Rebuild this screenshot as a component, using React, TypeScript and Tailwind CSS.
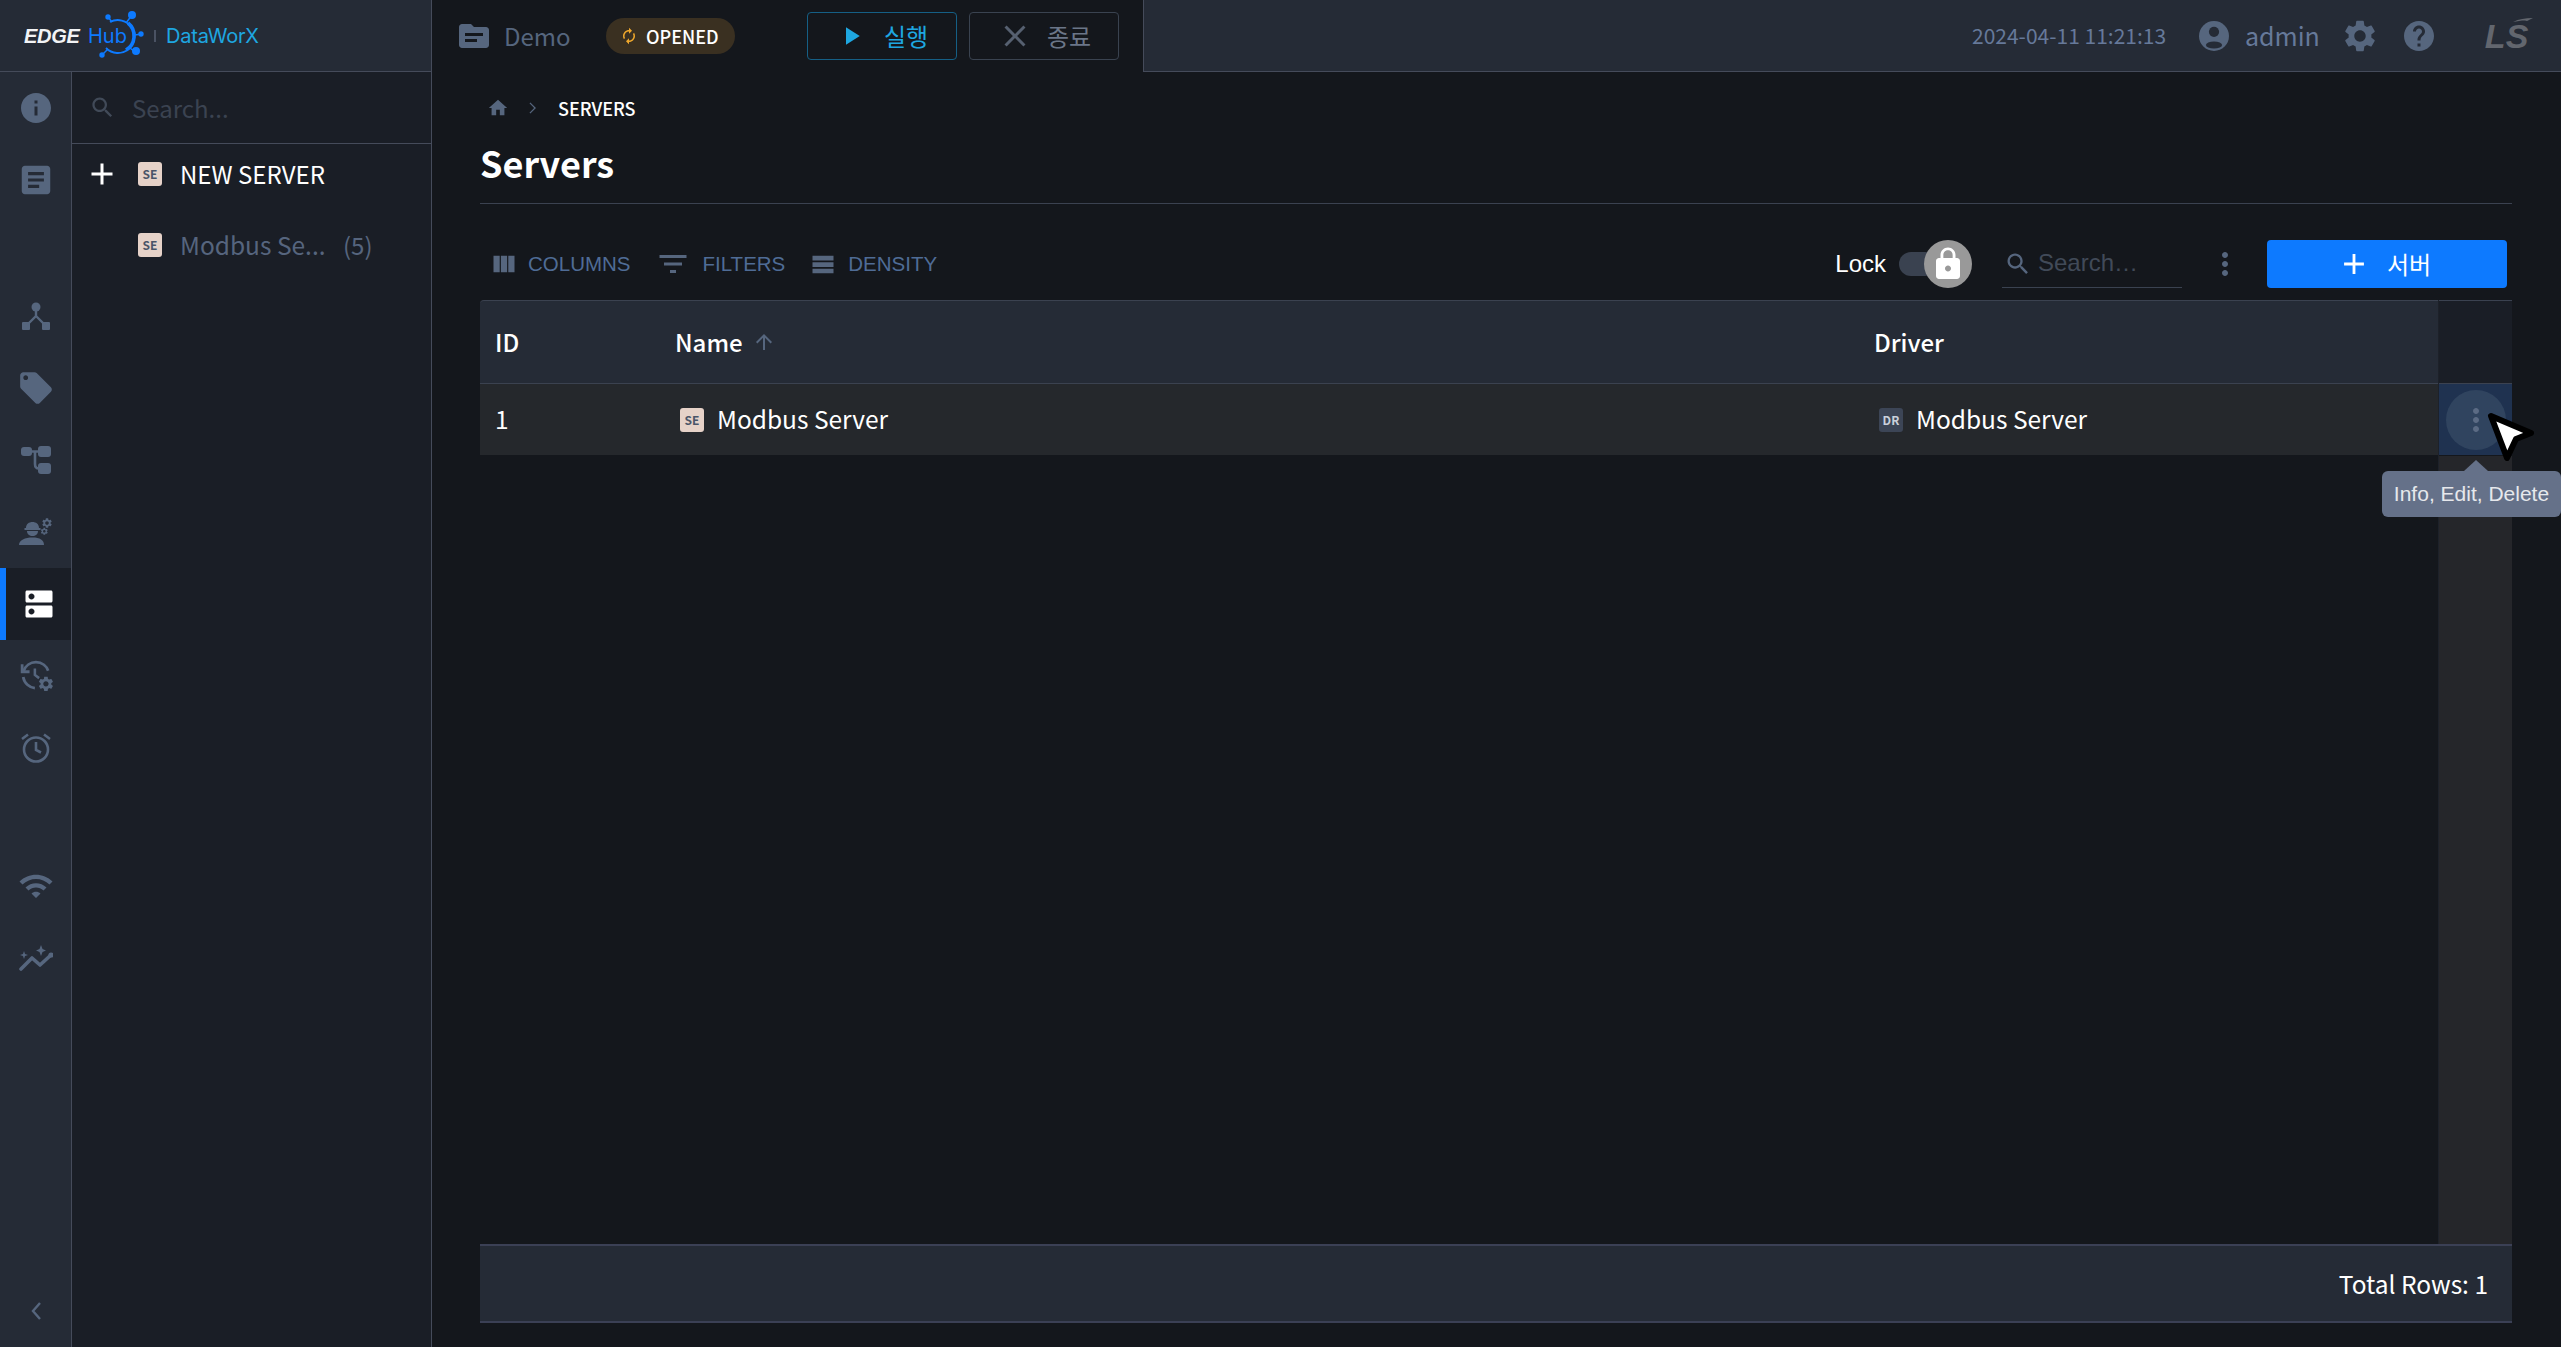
import React from "react";

const P = {
  info: "M12 2C6.48 2 2 6.48 2 12s4.48 10 10 10 10-4.48 10-10S17.52 2 12 2zm1 15h-2v-6h2v6zm0-8h-2V7h2v2z",
  article: "M19 3H5c-1.1 0-2 .9-2 2v14c0 1.1.9 2 2 2h14c1.1 0 2-.9 2-2V5c0-1.1-.9-2-2-2zm-5 14H7v-2h7v2zm3-4H7v-2h10v2zm0-4H7V7h10v2z",
  sell: "M21.41 11.58l-9-9C12.05 2.22 11.55 2 11 2H4c-1.1 0-2 .9-2 2v7c0 .55.22 1.05.59 1.42l9 9c.36.36.86.58 1.41.58.55 0 1.05-.22 1.41-.59l7-7c.37-.36.59-.86.59-1.41 0-.55-.23-1.06-.59-1.42zM5.5 7C4.67 7 4 6.33 4 5.5S4.67 4 5.5 4 7 4.67 7 5.5 6.33 7 5.5 7z",
  dns: "M20 13H4c-.55 0-1 .45-1 1v6c0 .55.45 1 1 1h16c.55 0 1-.45 1-1v-6c0-.55-.45-1-1-1zM7 19c-1.1 0-2-.9-2-2s.9-2 2-2 2 .9 2 2-.9 2-2 2zM20 3H4c-.55 0-1 .45-1 1v6c0 .55.45 1 1 1h16c.55 0 1-.45 1-1V4c0-.55-.45-1-1-1zM7 9c-1.1 0-2-.9-2-2s.9-2 2-2 2 .9 2 2-.9 2-2 2z",
  wifi: "M1 9l2 2c4.97-4.97 13.03-4.97 18 0l2-2C16.93 2.93 7.08 2.93 1 9zm8 8l3 3 3-3c-1.65-1.66-4.34-1.66-6 0zm-4-4l2 2c2.76-2.76 7.24-2.76 10 0l2-2C15.14 9.14 8.87 9.14 5 13z",
  folder: "M20 6h-8l-2-2H4c-1.1 0-1.99.9-1.99 2L2 18c0 1.1.9 2 2 2h16c1.1 0 2-.9 2-2V8c0-1.1-.9-2-2-2zm-6 10H6v-2h8v2zm4-4H6v-2h12v2z",
  gear: "M19.14 12.94c.04-.3.06-.61.06-.94 0-.32-.02-.64-.07-.94l2.03-1.58c.18-.14.23-.41.12-.61l-1.92-3.32c-.12-.22-.37-.29-.59-.22l-2.39.96c-.5-.38-1.03-.7-1.62-.94l-.36-2.54c-.04-.24-.24-.41-.48-.41h-3.84c-.24 0-.43.17-.47.41l-.36 2.54c-.59.24-1.13.57-1.62.94l-2.39-.96c-.22-.08-.47 0-.59.22L2.74 8.87c-.12.21-.08.47.12.61l2.03 1.58c-.05.3-.09.63-.09.94s.02.64.07.94l-2.03 1.58c-.18.14-.23.41-.12.61l1.92 3.32c.12.22.37.29.59.22l2.39-.96c.5.38 1.03.7 1.62.94l.36 2.54c.05.24.24.41.48.41h3.84c.24 0 .44-.17.47-.41l.36-2.54c.59-.24 1.13-.56 1.62-.94l2.39.96c.22.08.47 0 .59-.22l1.92-3.32c.12-.22.07-.47-.12-.61l-2.01-1.58zM12 15.6c-1.98 0-3.6-1.62-3.6-3.6s1.62-3.6 3.6-3.6 3.6 1.62 3.6 3.6-1.62 3.6-3.6 3.6z",
  help: "M12 2C6.48 2 2 6.48 2 12s4.48 10 10 10 10-4.48 10-10S17.52 2 12 2zm1 17h-2v-2h2v2zm2.07-7.75l-.9.92C13.45 12.9 13 13.5 13 15h-2v-.5c0-1.1.45-2.1 1.17-2.83l1.24-1.26c.37-.36.59-.86.59-1.41 0-1.1-.9-2-2-2s-2 .9-2 2H8c0-2.21 1.79-4 4-4s4 1.79 4 4c0 .88-.36 1.68-.93 2.25z",
  search: "M15.5 14h-.79l-.28-.27C15.41 12.59 16 11.11 16 9.5 16 5.91 13.09 3 9.5 3S3 5.91 3 9.5 5.91 16 9.5 16c1.61 0 3.09-.59 4.23-1.57l.27.28v.79l5 4.99L20.49 19l-4.99-5zm-6 0C7.01 14 5 11.99 5 9.5S7.01 5 9.5 5 14 7.01 14 9.5 11.99 14 9.5 14z",
  columns: "M14.67 5v14H9.33V5h5.34zm1 14H21V5h-5.33v14zm-7.34 0V5H3v14h5.33z",
  filter: "M10 18h4v-2h-4v2zM3 6v2h18V6H3zm3 7h12v-2H6v2z",
  density: "M3 5h18v4H3zM3 10.5h18v4H3zM3 16h18v4H3z",
  more: "M12 8c1.1 0 2-.9 2-2s-.9-2-2-2-2 .9-2 2 .9 2 2 2zm0 2c-1.1 0-2 .9-2 2s.9 2 2 2 2-.9 2-2-.9-2-2-2zm0 6c-1.1 0-2 .9-2 2s.9 2 2 2 2-.9 2-2-.9-2-2-2z",
  lock: "M18 8h-1V6c0-2.76-2.24-5-5-5S7 3.24 7 6v2H6c-1.1 0-2 .9-2 2v10c0 1.1.9 2 2 2h12c1.1 0 2-.9 2-2V10c0-1.1-.9-2-2-2zm-6 9c-1.1 0-2-.9-2-2s.9-2 2-2 2 .9 2 2-.9 2-2 2zm3.1-9H8.9V6c0-1.71 1.39-3.1 3.1-3.1 1.71 0 3.1 1.39 3.1 3.1v2z",
  home: "M10 20v-6h4v6h5v-8h3L12 3 2 12h3v8z",
  up: "M4 12l1.41 1.41L11 7.83V20h2V7.83l5.58 5.59L20 12l-8-8-8 8z",
  renew: "M12 6v3l4-4-4-4v3c-4.42 0-8 3.58-8 8 0 1.57.46 3.03 1.24 4.26L6.7 14.8c-.45-.83-.7-1.79-.7-2.8 0-3.31 2.69-6 6-6zm6.76 1.74L17.3 9.2c.44.84.7 1.79.7 2.8 0 3.31-2.69 6-6 6v-3l-4 4 4 4v-3c4.42 0 8-3.58 8-8 0-1.57-.46-3.03-1.24-4.26z",
  plus: "M19 13h-6v6h-2v-6H5v-2h6V5h2v6h6v2z",
  close: "M19 6.41L17.59 5 12 10.59 6.41 5 5 6.41 10.59 12 5 17.59 6.41 19 12 13.41 17.59 19 19 17.59 13.41 12z",
  play: "M8 5v14l11-7z",
};

function I({ d, className }: { d: string; className: string }) {
  return (
    <svg viewBox="0 0 24 24" fill="currentColor" className={className}>
      <path d={d} />
    </svg>
  );
}

function Badge({ label, dark }: { label: string; dark?: boolean }) {
  return (
    <span
      className={
        dark
          ? "flex h-[24px] w-[24px] shrink-0 items-center justify-center rounded-[3px] bg-[#3c4556] text-[12px] font-bold leading-none text-[#c9d0db]"
          : "flex h-[24px] w-[24px] shrink-0 items-center justify-center rounded-[3px] bg-[#e6d2c8] text-[12px] font-bold leading-none text-[#4a5568]"
      }
    >
      {label}
    </span>
  );
}

function Logo() {
  return (
    <div className="flex h-full items-center pl-[24px]">
      <span className="w-[64px] font-['Liberation_Sans',sans-serif] text-[20px] font-bold italic leading-none tracking-[-0.3px] text-[#f2f3f5]">
        EDGE
      </span>
      <span className="relative w-[66px] font-['Inter',sans-serif] text-[20px] leading-none text-[#0d7aff]">
        Hub
        <svg viewBox="0 0 60 60" className="absolute left-[0px] top-[-19px] h-[60px] w-[60px]" fill="none">
          <path d="M22 15 A16.500 16.500 0 1 1 18 41" stroke="#0d7aff" strokeWidth="1.800" />
          <path d="M40 16 A16.500 16.500 0 0 1 38 43" stroke="#0d7aff" strokeWidth="3.600" />
          <path d="M44 8 L38 16 M20 10 L24 15 M53 27 L47 28 M47 45 L42 41 M14 48 L20 42" stroke="#0d7aff" strokeWidth="1.500" />
          <circle cx="44" cy="8" r="4" fill="#0d7aff" />
          <circle cx="20" cy="10" r="2.700" fill="#0d7aff" />
          <circle cx="53" cy="27" r="2.700" fill="#0d7aff" />
          <circle cx="48" cy="44" r="4" fill="#0d7aff" />
          <circle cx="14" cy="48" r="2.700" fill="#0d7aff" />
        </svg>
      </span>
      <span className="h-[12px] w-[2px] bg-[#4a5263]" />
      <span className="ml-[10px] font-['Inter',sans-serif] text-[20px] leading-none tracking-[-0.2px] text-[#1ea7e1]">
        DataWorX
      </span>
    </div>
  );
}

function TopBar() {
  return (
    <div className="flex h-[72px] shrink-0">
      <div className="h-full w-[432px] shrink-0 border-b border-r border-[#454b5a] bg-[#252b36]">
        <Logo />
      </div>
      <div className="flex h-full w-[711px] shrink-0 items-center bg-[#14171c] pl-[24px]">
        <I d={P.folder} className="h-[36px] w-[36px] text-[#56667e]" />
        <span className="ml-[12px] w-[64px] text-[24px] leading-none text-[#56667e]">Demo</span>
        <div className="ml-[38px] flex h-[36px] w-[129px] items-center rounded-full bg-[#3a3021] pl-[14px]">
          <I d={P.renew} className="h-[18px] w-[18px] text-[#f0a82c]" />
          <span className="ml-[8px] text-[18px] font-medium leading-none text-white">OPENED</span>
        </div>
        <div className="ml-[72px] flex h-[48px] w-[150px] items-center justify-center gap-[18px] rounded-[4px] border border-[#155f85] text-[#1ea7e1]">
          <I d={P.play} className="h-[30px] w-[30px]" />
          <span className="text-[24px] leading-none">실행</span>
        </div>
        <div className="ml-[12px] flex h-[48px] w-[150px] items-center justify-center gap-[14px] rounded-[4px] border border-[#3a4350] text-[#6b7688]">
          <I d={P.close} className="h-[36px] w-[36px] text-[#566070]" />
          <span className="text-[24px] leading-none">종료</span>
        </div>
      </div>
      <div className="flex h-full flex-1 items-center border-b border-l border-[#454b5a] bg-[#252b36] pl-[828px] text-[#56667e]">
        <span className="w-[224px] text-[21px] leading-none text-[#66799a]">2024-04-11 11:21:13</span>
        <svg viewBox="0 0 24 24" className="h-[36px] w-[36px] shrink-0">
          <circle cx="12" cy="12" r="10" fill="#56667e" />
          <circle cx="12" cy="9.200" r="3.400" fill="#252b36" />
          <ellipse cx="12" cy="18" rx="5.400" ry="2.400" fill="#252b36" />
        </svg>
        <span className="ml-[13px] text-[25px] leading-none text-[#66799a]">admin</span>
        <I d={P.gear} className="ml-[21px] h-[38px] w-[38px] shrink-0" />
        <I d={P.help} className="ml-[22px] h-[36px] w-[36px] shrink-0" />
        <span className="relative ml-[48px] font-['Liberation_Sans',sans-serif] text-[34px] font-bold italic leading-none text-[#62666e]">
          LS
          <svg viewBox="0 0 20 8" className="absolute right-[-5px] top-[-1px] h-[8px] w-[20px]" fill="#62666e">
            <path d="M0 4 C6 1 12 0 20 0 L14 3 L12 2.4 C8 2.4 4 3 0 4z" />
          </svg>
        </span>
      </div>
    </div>
  );
}

function NetIcon() {
  return (
    <svg viewBox="0 0 28 28" fill="#56667e" className="h-[28px] w-[28px]">
      <circle cx="14" cy="5" r="4.500" />
      <rect x="0" y="20" width="8" height="8" rx="1" />
      <rect x="20" y="20" width="8" height="8" rx="1" />
      <path d="M14 8 V14 L5 23 M14 14 L23 23" stroke="#56667e" strokeWidth="2.400" fill="none" />
    </svg>
  );
}

function FlowIcon() {
  return (
    <svg viewBox="0 0 30 28" fill="#56667e" className="h-[28px] w-[30px]">
      <rect x="0" y="1" width="11" height="9" rx="3" />
      <rect x="17" y="0" width="13" height="11" rx="3" />
      <rect x="17" y="17" width="13" height="11" rx="3" />
      <path d="M10 5.500 H18 M14 5.500 V18 C14 21 15 22.500 18 22.500" stroke="#56667e" strokeWidth="2.600" fill="none" />
    </svg>
  );
}

function WorkerIcon() {
  return (
    <svg viewBox="0 0 34 28" fill="#56667e" className="h-[28px] w-[34px]">
      <path d="M7 11 C7 7 10 5 13.500 5 C17 5 20 7 20 11 L21.500 11 V13 H5.500 V11z" />
      <path d="M8 14 H19 C19 17.500 16.500 19 13.500 19 C10.500 19 8 17.500 8 14z" />
      <path d="M0 28 C0 23 6 20.500 13.500 20.500 C21 20.500 25 23 25 28z" />
      <g transform="translate(22,0) scale(0.5)"><path d={P.gear} /></g>
      <g transform="translate(21,10) scale(0.36)"><path d={P.gear} /></g>
    </svg>
  );
}

function HistoryIcon() {
  return (
    <svg viewBox="0 0 32 32" fill="none" className="ml-[2px] h-[34px] w-[34px]">
      <path d="M2 5 V12 H9" stroke="#56667e" strokeWidth="2.600" />
      <path d="M3 12 C5 6 10 3 15 3 C21 3 25 7 26.500 11 M3 17 C4 23 9 27 14 27.500" stroke="#56667e" strokeWidth="2.600" />
      <path d="M14 9 V15 L18 18" stroke="#56667e" strokeWidth="2.400" />
      <g transform="translate(16,15) scale(0.7)" fill="#56667e"><path d={P.gear} /></g>
    </svg>
  );
}

function AlarmIcon() {
  return (
    <svg viewBox="0 0 30 30" fill="none" stroke="#56667e" strokeWidth="2.600" className="h-[30px] w-[30px]">
      <circle cx="15" cy="16.500" r="12" />
      <path d="M15 9 V17 L20 19.500 M1 6 L7 1.500 M29 6 L23 1.500" />
    </svg>
  );
}

function ChartIcon() {
  return (
    <svg viewBox="0 0 34 30" fill="none" className="h-[30px] w-[34px]">
      <path d="M2 26 L13 15 L21 22 L32 12" stroke="#56667e" strokeWidth="3.600" strokeLinecap="round" strokeLinejoin="round" />
      <circle cx="32" cy="12" r="2.600" fill="#56667e" />
      <path d="M22 2 L23.500 6 L27 7.500 L23.500 9 L22 13 L20.500 9 L17 7.500 L20.500 6z M5 8 L6 11 L9 12 L6 13 L5 16 L4 13 L1 12 L4 11z" fill="#56667e" />
    </svg>
  );
}

function Rail() {
  return (
    <div className="flex h-full w-[72px] shrink-0 flex-col border-r border-[#454b5a] bg-[#252b36]">
      <div className="flex h-[72px] shrink-0 items-center justify-center">
        <I d={P.info} className="h-[36px] w-[36px] text-[#56667e]" />
      </div>
      <div className="flex h-[72px] shrink-0 items-center justify-center">
        <I d={P.article} className="h-[38px] w-[38px] text-[#56667e]" />
      </div>
      <div className="h-[64px] shrink-0" />
      <div className="flex h-[72px] shrink-0 items-center justify-center"><NetIcon /></div>
      <div className="flex h-[72px] shrink-0 items-center justify-center">
        <I d={P.sell} className="h-[38px] w-[38px] text-[#56667e]" />
      </div>
      <div className="flex h-[72px] shrink-0 items-center justify-center"><FlowIcon /></div>
      <div className="flex h-[72px] shrink-0 items-center justify-center pb-[2px]"><WorkerIcon /></div>
      <div className="flex h-[72px] shrink-0 items-center justify-center border-l-[6px] border-[#0d7aff] bg-[#1a1e26]">
        <I d={P.dns} className="h-[36px] w-[36px] text-white" />
      </div>
      <div className="flex h-[72px] shrink-0 items-center justify-center"><HistoryIcon /></div>
      <div className="flex h-[72px] shrink-0 items-center justify-center"><AlarmIcon /></div>
      <div className="h-[66px] shrink-0" />
      <div className="flex h-[72px] shrink-0 items-center justify-center">
        <I d={P.wifi} className="h-[36px] w-[36px] text-[#56667e]" />
      </div>
      <div className="flex h-[72px] shrink-0 items-center justify-center"><ChartIcon /></div>
      <div className="flex flex-1 items-end justify-center pb-[26px]">
        <svg viewBox="0 0 12 20" fill="none" stroke="#56667e" strokeWidth="2.400" className="h-[20px] w-[12px]">
          <path d="M10 2 L3 10 L10 18" />
        </svg>
      </div>
    </div>
  );
}

function Sidebar() {
  return (
    <div className="flex h-full w-[360px] shrink-0 flex-col border-r border-[#454b5a] bg-[#1a1e26]">
      <div className="flex h-[72px] shrink-0 items-center border-b border-[#454b5a] pl-[17px]">
        <I d={P.search} className="h-[27px] w-[27px] text-[#414a58]" />
        <span className="ml-[16px] text-[24px] leading-none text-[#3b4351]">Search...</span>
      </div>
      <div className="flex h-[60px] shrink-0 items-center pl-[12px]">
        <I d={P.plus} className="h-[36px] w-[36px] text-white" />
        <span className="ml-[18px]"><Badge label="SE" /></span>
        <span className="ml-[18px] text-[24px] leading-none text-white">NEW SERVER</span>
      </div>
      <div className="mt-[11px] flex h-[60px] shrink-0 items-center pl-[66px]">
        <Badge label="SE" />
        <span className="ml-[18px] w-[146px] text-[24.500px] leading-none text-[#56657e]">Modbus Se...</span>
        <span className="ml-[17px] text-[24px] leading-none text-[#56657e]">(5)</span>
      </div>
    </div>
  );
}

function Toolbar() {
  const item = "font-['Liberation_Sans',sans-serif] text-[20.500px] leading-none text-[#4f6c96]";
  return (
    <div className="flex h-[96px] shrink-0 items-end pb-[12px]">
      <div className="flex h-[48px] flex-1 items-center">
        <I d={P.columns} className="ml-[10px] h-[28px] w-[28px] text-[#56667e]" />
        <span className={"ml-[10px] " + item}>COLUMNS</span>
        <I d={P.filter} className="ml-[24px] h-[36px] w-[36px] text-[#56667e]" />
        <span className={"ml-[12px] " + item}>FILTERS</span>
        <I d={P.density} className="ml-[24px] h-[28px] w-[28px] text-[#56667e]" />
        <span className={"ml-[11px] " + item}>DENSITY</span>
      </div>
      <div className="flex h-[48px] items-center font-['Liberation_Sans',sans-serif]">
        <span className="text-[24px] leading-none text-white">Lock</span>
        <div className="relative ml-[13px] h-[24px] w-[60px]">
          <div className="h-[24px] w-[38px] rounded-full bg-[#3a4250]" />
          <div className="absolute left-[25px] top-[-12px] flex h-[48px] w-[48px] items-center justify-center rounded-full bg-[#999999]">
            <I d={P.lock} className="h-[36px] w-[36px] text-white" />
          </div>
        </div>
        <div className="ml-[43px] flex h-[48px] w-[180px] items-center border-b border-[#3a4250] pl-[2px]">
          <I d={P.search} className="h-[28px] w-[28px] text-[#56667e]" />
          <span className="ml-[6px] pb-[1px] text-[24px] leading-none text-[#414a58]">Search…</span>
        </div>
        <I d={P.more} className="ml-[25px] h-[36px] w-[36px] text-[#56667e]" />
        <div className="ml-[24px] mr-[5px] flex h-[48px] w-[240px] items-center justify-center gap-[16px] rounded-[4px] bg-[#0d7aff] pr-[6px] font-['Noto_Sans_CJK_KR',sans-serif] text-white">
          <I d={P.plus} className="h-[34px] w-[34px]" />
          <span className="text-[24px] leading-none">서버</span>
        </div>
      </div>
    </div>
  );
}

function Table() {
  return (
    <div className="flex min-h-0 flex-1 flex-col">
      <div className="flex min-h-0 flex-1">
        <div className="flex flex-1 flex-col">
          <div className="flex h-[84px] items-center rounded-tl-[4px] border-y border-[#3b4250] bg-[#252b36] text-[24px] font-medium leading-none text-white">
            <div className="w-[195px] pl-[15px]">ID</div>
            <div className="flex w-[1199px] items-center">
              Name
              <I d={P.up} className="ml-[9px] h-[24px] w-[24px] text-[#56667e]" />
            </div>
            <div>Driver</div>
          </div>
          <div className="flex h-[71px] items-center bg-[#25282c] text-[24.500px] leading-none text-white">
            <div className="w-[195px] pl-[15px]">1</div>
            <div className="flex w-[1199px] items-center pl-[5px]">
              <Badge label="SE" />
              <span className="ml-[13px]">Modbus Server</span>
            </div>
            <div className="flex items-center pl-[5px]">
              <Badge label="DR" dark />
              <span className="ml-[13px]">Modbus Server</span>
            </div>
          </div>
        </div>
        <div className="flex w-[74px] shrink-0 flex-col border-l border-[#1d2129]">
          <div className="h-[84px] border-y border-[#3b4250] bg-[#1a1e26]" />
          <div className="flex h-[71px] items-center justify-center bg-[#1f3250]">
            <div className="flex h-[60px] w-[60px] items-center justify-center rounded-full bg-[#30445f]">
              <I d={P.more} className="h-[36px] w-[36px] text-[#5b6b84]" />
            </div>
          </div>
          <div className="mt-[1px] flex-1 bg-[#25262a]" />
        </div>
      </div>
      <div className="flex h-[79px] shrink-0 items-center justify-end border-b-2 border-t-2 border-[#3b4055] bg-[#252b36] pr-[24px] pt-[2px] text-[24.500px] leading-none text-white">
        Total Rows: 1
      </div>
    </div>
  );
}

function Overlay() {
  return (
    <>
      <svg viewBox="0 0 60 60" className="absolute left-[2482px] top-[407px] h-[60px] w-[60px]">
        <path d="M9 9 L49 26 L34 32 L25 51z" fill="#ffffff" stroke="#000000" strokeWidth="6" strokeLinejoin="round" />
      </svg>
      <div className="absolute left-[2382px] top-[460px] w-[179px]">
        <div className="mx-auto h-0 w-0 translate-x-[4px] border-x-[12px] border-b-[11px] border-x-transparent border-b-[#657189]" />
        <div className="flex h-[46px] items-center justify-center rounded-[6px] bg-[#657189] pb-[2px] font-['Liberation_Sans',sans-serif] text-[21px] leading-none text-[#e6e8ec]">
          Info, Edit, Delete
        </div>
      </div>
    </>
  );
}

export default function App() {
  return (
    <div className="relative flex h-[1347px] w-[2561px] flex-col overflow-hidden bg-[#14171c] font-['Noto_Sans_CJK_KR',sans-serif]">
      <TopBar />
      <div className="flex min-h-0 flex-1">
        <Rail />
        <Sidebar />
        <main className="flex min-w-0 flex-1 flex-col pb-[24px] pl-[48px] pr-[49px]">
          <div className="flex h-[72px] shrink-0 items-center pl-[7px]">
            <I d={P.home} className="h-[22px] w-[22px] text-[#56667e]" />
            <svg viewBox="0 0 10 14" fill="none" stroke="#56667e" strokeWidth="1.500" className="ml-[19px] h-[12px] w-[9px]">
              <path d="M2 1 L8 7 L2 13" />
            </svg>
            <span className="ml-[21px] text-[18px] font-medium leading-none text-white">SERVERS</span>
          </div>
          <div className="flex h-[60px] shrink-0 items-start border-b border-[#3b4250] text-[36px] font-bold leading-none text-white">
            Servers
          </div>
          <Toolbar />
          <Table />
        </main>
      </div>
      <Overlay />
    </div>
  );
}
